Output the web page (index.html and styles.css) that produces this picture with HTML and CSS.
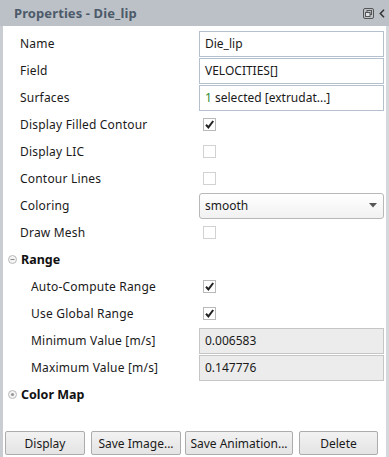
FILE: index.html
```html
<!DOCTYPE html>
<html>
<head>
<meta charset="utf-8">
<link rel="stylesheet" href="styles.css">
</head>
<body>
<div class="panel">
  <div class="titlebar">
    <span class="title">Properties - Die_lip</span>
    <span class="tb-icons">
      <svg class="tb-float" width="11" height="11" viewBox="0 0 11 11"><rect x="0.5" y="0.5" width="10" height="10" rx="1.5" fill="none" stroke="#555"/><rect x="4" y="2.5" width="4.5" height="4" fill="none" stroke="#555"/><rect x="2.5" y="4.5" width="4.5" height="4" fill="#dde0e5" stroke="#555"/></svg>
      <svg class="tb-collapse" width="6" height="9" viewBox="0 0 6 9"><path d="M5 0.8 L1.3 4.5 L5 8.2" fill="none" stroke="#333" stroke-width="1.5"/></svg>
    </span>
  </div>
  <div class="content">
    <div class="rows">
      <div class="row"><span class="label">Name</span><div class="field"><span class="input">Die_lip</span></div></div>
      <div class="row"><span class="label">Field</span><div class="field"><span class="input">VELOCITIES[]</span></div></div>
      <div class="row"><span class="label">Surfaces</span><div class="field"><span class="input"><span class="green">1</span>&nbsp;selected [extrudat...]</span></div></div>
      <div class="row"><span class="label">Display Filled Contour</span><div class="field"><span class="check on"><svg width="11" height="11" viewBox="0 0 11 11"><path d="M2 5.8 L4.4 8.4 L9.2 2" fill="none" stroke="#222" stroke-width="2"/></svg></span></div></div>
      <div class="row"><span class="label">Display LIC</span><div class="field"><span class="check"></span></div></div>
      <div class="row"><span class="label">Contour Lines</span><div class="field"><span class="check"></span></div></div>
      <div class="row"><span class="label">Coloring</span><div class="field"><span class="select">smooth<svg class="arrow" width="8" height="5" viewBox="0 0 8 5"><path d="M0 0 H8 L4 4.5 Z" fill="#555"/></svg></span></div></div>
      <div class="row"><span class="label">Draw Mesh</span><div class="field"><span class="check"></span></div></div>
      <div class="row group"><svg class="exp" width="9" height="9" viewBox="0 0 9 9"><circle cx="4.5" cy="4.5" r="4" fill="#f4f4f4" stroke="#b8b8b8"/><path d="M2.5 4.5 H6.5" stroke="#888"/></svg><span class="label bold">Range</span></div>
      <div class="row sub"><span class="label">Auto-Compute Range</span><div class="field"><span class="check on"><svg width="11" height="11" viewBox="0 0 11 11"><path d="M2 5.8 L4.4 8.4 L9.2 2" fill="none" stroke="#222" stroke-width="2"/></svg></span></div></div>
      <div class="row sub"><span class="label">Use Global Range</span><div class="field"><span class="check on"><svg width="11" height="11" viewBox="0 0 11 11"><path d="M2 5.8 L4.4 8.4 L9.2 2" fill="none" stroke="#222" stroke-width="2"/></svg></span></div></div>
      <div class="row sub"><span class="label">Minimum Value [m/s]</span><div class="field"><span class="input ro">0.006583</span></div></div>
      <div class="row sub"><span class="label">Maximum Value [m/s]</span><div class="field"><span class="input ro">0.147776</span></div></div>
      <div class="row group"><svg class="exp" width="9" height="9" viewBox="0 0 9 9"><circle cx="4.5" cy="4.5" r="4" fill="#f4f4f4" stroke="#b8b8b8"/><circle cx="4.5" cy="4.5" r="1.6" fill="#999"/></svg><span class="label bold">Color Map</span></div>
    </div>
    <div class="buttons">
      <button class="btn w-display">Display</button>
      <button class="btn w-img">Save Image...</button>
      <button class="btn w-anim">Save Animation...</button>
      <button class="btn w-del">Delete</button>
    </div>
  </div>
</div>
</body>
</html>
```

FILE: styles.css
```css
* { box-sizing: border-box; }
html, body { margin: 0; padding: 0; background: #fff; }
body { font-family: "Noto Sans", "Open Sans", sans-serif; font-size: 12px; color: #1a1a1a; }
.panel { width: 389px; height: 457px; display: flex; flex-direction: column; background: #fff; }
.titlebar {
  height: 26px; background: #bcc1c8; display: flex; align-items: center;
  justify-content: space-between; padding: 0 4px 0 14px;
}
.title { font-weight: bold; font-size: 13px; color: #4c5a6a; letter-spacing: 0.1px; }
.tb-icons { display: flex; align-items: center; gap: 5px; }
.content {
  flex: 1; display: flex; flex-direction: column; justify-content: space-between;
  border-left: 3px solid #c9ccd1; border-right: 3px solid #d4d7dc; padding-top: 4px; padding-bottom: 1px;
}
.rows { display: flex; flex-direction: column; }
.row { height: 27px; display: flex; align-items: center; padding-left: 17px; }
.row.sub { padding-left: 28px; }
.row.group { padding-left: 5px; }
.exp { margin-right: 4px; }
.label { width: 179px; flex: none; white-space: nowrap; letter-spacing: 0.2px; line-height: 16px; }
.row.sub .label { width: 168px; }
.label.bold { font-weight: bold; font-size: 12.5px; color: #111; letter-spacing: 0; }
.field { width: 185px; height: 26px; display: flex; align-items: center; }
.input {
  width: 100%; height: 26px; border: 1px solid #b4c0ce; display: flex; align-items: center;
  padding-left: 5px; background: #fff; white-space: nowrap;
}
.input.ro { background: #ececec; border-color: #c6c6c6; }
.green { color: #2e8b2e; }
.check {
  width: 13px; height: 13px; border: 1px solid #d2d2d2; margin-left: 4px; background: #fff;
  display: flex; align-items: center; justify-content: center;
}
.check.on { border-color: #b9b9b9; }
.select {
  width: 100%; height: 26px; border: 1px solid #b8b8b8; border-radius: 3px;
  background: linear-gradient(#ffffff, #f1f1f1); display: flex; align-items: center;
  justify-content: space-between; padding: 0 6px 0 5px;
}
.buttons { display: flex; padding: 0 0 0 2px; height: 25px; }
.btn {
  font-family: "Noto Sans", "Open Sans", sans-serif; font-size: 12px; color: #1a1a1a;
  height: 24px; border: 1px solid #acacac; border-radius: 2px;
  background: linear-gradient(#f2f2f2, #e4e4e4); padding: 0;
}
.w-display { width: 80px; }
.w-img { width: 90px; margin-left: 6px; }
.w-anim { width: 108px; margin-left: 4px; }
.w-del { width: 79px; margin-left: 6px; }
```
